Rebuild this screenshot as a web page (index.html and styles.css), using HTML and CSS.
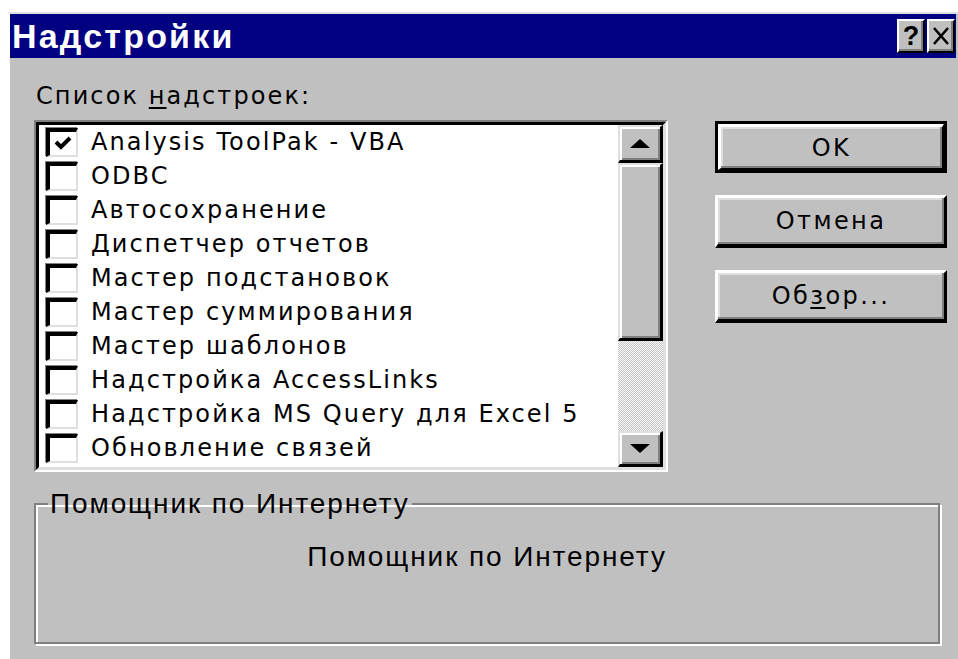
FILE: index.html
```html
<!DOCTYPE html>
<html lang="ru">
<head>
<meta charset="utf-8">
<title>Надстройки</title>
<link rel="stylesheet" href="styles.css">
</head>
<body>
<div class="window">
  <div class="titlebar">
    <span class="title">Надстройки</span>
    <div class="caption-btns">
      <span class="cap-btn">?</span>
      <span class="cap-btn cap-close">
        <svg width="18" height="18" viewBox="0 0 18 18"><path d="M2 1 L16 17 M16 1 L2 17" stroke="#000" stroke-width="2.6"/></svg>
      </span>
    </div>
  </div>
  <div class="content">
    <div class="main-row">
      <div class="list-col">
        <div class="list-label">Список <u>н</u>адстроек:</div>
        <div class="listbox">
          <div class="listbox-inner">
            <ul class="items">
              <li><span class="check"><svg width="18" height="14" viewBox="0 0 18 14"><path d="M2 6 L7 11 L16 2" fill="none" stroke="#000" stroke-width="4"/></svg></span>Analysis ToolPak - VBA</li>
              <li><span class="check"></span>ODBC</li>
              <li><span class="check"></span>Автосохранение</li>
              <li><span class="check"></span>Диспетчер отчетов</li>
              <li><span class="check"></span>Мастер подстановок</li>
              <li><span class="check"></span>Мастер суммирования</li>
              <li><span class="check"></span>Мастер шаблонов</li>
              <li><span class="check"></span>Надстройка AccessLinks</li>
              <li><span class="check"></span>Надстройка MS Query для Excel 5</li>
              <li><span class="check"></span>Обновление связей</li>
            </ul>
            <div class="scrollbar">
              <div class="sb-btn sb-up"><span class="arrow-up"></span></div>
              <div class="sb-thumb"></div>
              <div class="sb-track"></div>
              <div class="sb-btn sb-down"><span class="arrow-down"></span></div>
            </div>
          </div>
        </div>
      </div>
      <div class="btn-col">
        <div class="btn btn-default"><div class="btn-face">OK</div></div>
        <div class="btn"><div class="btn-face">Отмена</div></div>
        <div class="btn"><div class="btn-face">Об<u>з</u>ор...</div></div>
      </div>
    </div>
    <fieldset class="group">
      <legend>Помощник по Интернету</legend>
      <div class="group-text">Помощник по Интернету</div>
    </fieldset>
  </div>
</div>
</body>
</html>
```

FILE: styles.css
```css
html, body {
  margin: 0;
  padding: 0;
  background: #fff;
  overflow: hidden;
}

.window {
  margin: 12px 0 0 8px;
  height: 647px;
  box-sizing: border-box;
  background: #c0c0c0;
  border-top: 2px solid #dfdfdf;
  border-left: 2px solid #fff;
  padding-right: 2px;
  font-family: "DejaVu Sans", sans-serif;
  color: #000;
}

/* caption bar */
.titlebar {
  height: 44px;
  background: #000080;
  display: flex;
  align-items: center;
  justify-content: space-between;
  padding: 0 0 0 2px;
}

.title {
  color: #fff;
  font-family: "Liberation Sans", sans-serif;
  font-weight: bold;
  font-size: 34px;
  letter-spacing: 2.2px;
}

.caption-btns {
  display: flex;
  gap: 2px;
  padding-right: 1px;
}

.cap-btn {
  width: 24px;
  height: 30px;
  background: #c0c0c0;
  border-style: solid;
  border-width: 2px;
  border-color: #fff #000 #000 #fff;
  box-shadow: inset -2px -2px #808080;
  display: flex;
  align-items: center;
  justify-content: center;
  font-family: "Liberation Sans", sans-serif;
  font-weight: bold;
  font-size: 27px;
}

/* dialog body */
.content {
  padding: 24px 8px 0 24px;
}

.main-row {
  display: flex;
  align-items: flex-start;
}

.list-col {
  width: 634px;
}

.list-label {
  font-size: 24px;
  letter-spacing: 2.1px;
  line-height: 28px;
  height: 38px;
  padding-left: 2px;
}

.list-label u,
.btn-face u {
  text-decoration-thickness: 2px;
  text-underline-offset: 3px;
}

.listbox {
  border: 2px solid;
  border-color: #808080 #fff #fff #808080;
}

.listbox-inner {
  border: 3px solid;
  border-color: #000 #dfdfdf #dfdfdf #000;
  background: #fff;
  height: 342px;
  display: flex;
}

.items {
  list-style: none;
  margin: 0;
  padding: 0;
  flex: 1;
}

.items li {
  height: 34px;
  display: flex;
  align-items: center;
  font-size: 24px;
  letter-spacing: 2.1px;
  white-space: nowrap;
}

.check {
  width: 26px;
  height: 23px;
  margin: 0 13px 0 7px;
  background: #fff;
  border-style: solid;
  border-width: 4px 2px 2px 4px;
  border-color: #000 #dfdfdf #dfdfdf #000;
  box-shadow: -1px -1px 0 #808080;
  display: flex;
  align-items: center;
  justify-content: center;
  flex: none;
}

/* vertical scrollbar */
.scrollbar {
  width: 45px;
  display: flex;
  flex-direction: column;
  flex: none;
}

.sb-btn,
.sb-thumb {
  box-sizing: border-box;
  background: #c0c0c0;
  border-style: solid;
  border-width: 2px 3px 3px 2px;
  border-color: #dfdfdf #000 #000 #dfdfdf;
  box-shadow: inset 2px 2px #fff, inset -2px -2px #808080;
  display: flex;
  align-items: center;
  justify-content: center;
}

.sb-up { height: 38px; }
.sb-thumb { height: 178px; }
.sb-down { height: 36px; }

.sb-track {
  flex: 1;
  background: repeating-conic-gradient(#fff 0 25%, #c0c0c0 0 50%) 0 0 / 2px 2px;
}

.arrow-up,
.arrow-down {
  width: 0;
  height: 0;
  border-left: 10px solid transparent;
  border-right: 10px solid transparent;
}

.arrow-up { border-bottom: 9px solid #000; }
.arrow-down { border-top: 9px solid #000; }

/* push buttons */
.btn-col {
  margin-left: 47px;
  margin-top: 39px;
  width: 232px;
  display: flex;
  flex-direction: column;
  gap: 22px;
}

.btn {
  height: 53px;
  box-sizing: border-box;
}

.btn-default {
  height: 52px;
  border: 3px solid #000;
}

.btn-face {
  height: 100%;
  box-sizing: border-box;
  background: #c0c0c0;
  border-style: solid;
  border-width: 3px 3px 4px 3px;
  border-color: #fff #000 #000 #fff;
  box-shadow: inset -2px -2px #808080, inset 2px 2px #dfdfdf;
  display: flex;
  align-items: center;
  justify-content: center;
  font-size: 24px;
  letter-spacing: 2.4px;
}

.btn-default .btn-face {
  border-width: 3px 2px 2px 3px;
}

/* group box */
.group {
  margin: 16px 8px 0 0;
  padding: 0;
  height: 156px;
  box-sizing: border-box;
  border: 2px solid #808080;
  box-shadow: 2px 2px 0 #fff, inset 2px 2px 0 #fff;
  min-width: 0;
}

.group legend {
  margin-left: 12px;
  padding: 0 2px;
  font-family: "Liberation Sans", sans-serif;
  font-size: 28px;
  letter-spacing: 1.9px;
}

.group-text {
  text-align: center;
  font-family: "Liberation Sans", sans-serif;
  font-size: 28px;
  letter-spacing: 1.9px;
  margin-top: 21px;
}
```
